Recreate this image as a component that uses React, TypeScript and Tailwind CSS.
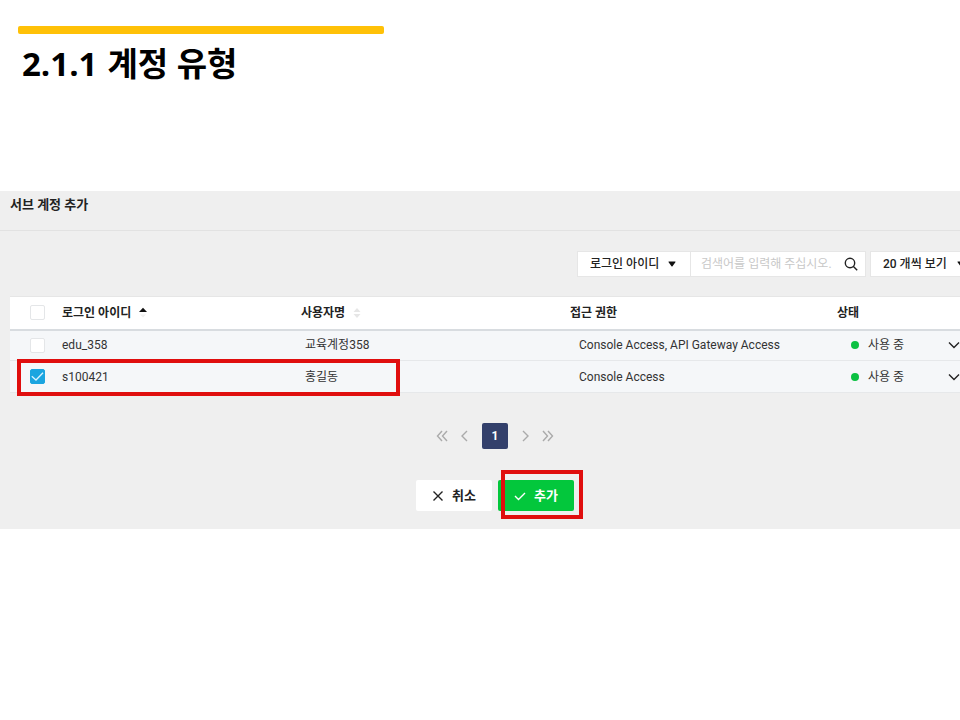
import React, { useState } from "react";

interface Account {
  id: string;
  name: string;
  access: string;
  status: string;
}

const accounts: Account[] = [
  {
    id: "edu_358",
    name: "교육계정358",
    access: "Console Access, API Gateway Access",
    status: "사용 중",
  },
  {
    id: "s100421",
    name: "홍길동",
    access: "Console Access",
    status: "사용 중",
  },
];

interface CheckboxProps {
  label: string;
  checked: boolean;
  onChange: () => void;
}

const Checkbox: React.FC<CheckboxProps> = ({ label, checked, onChange }) => (
  <label className="relative block size-[15px]">
    <input
      type="checkbox"
      aria-label={label}
      checked={checked}
      onChange={onChange}
      className="block size-[15px] appearance-none rounded-xs border border-[#e4e6e8] bg-white checked:border-[#1ba5e0] checked:bg-[#1ba5e0]"
    />
    {checked && (
      <svg
        viewBox="0 0 15 15"
        className="pointer-events-none absolute inset-0 size-[15px]"
        fill="none"
        stroke="#d9f3ff"
        strokeWidth="1.3"
      >
        <path d="M1.8 7.2 6 11l7-7.2" />
      </svg>
    )}
  </label>
);

const Caret = () => (
  <svg viewBox="0 0 8 6" className="h-[6px] w-[8px]" fill="#111">
    <path d="M.9.5h6.2q.8 0 .3.7L4.5 5.3q-.5.6-1 0L.6 1.2Q.1.5.9.5Z" />
  </svg>
);

// small stroked icons, drawn on a 12px grid
const Icon: React.FC<{ d: string }> = ({ d }) => (
  <svg
    viewBox="0 0 12 12"
    className="size-3"
    fill="none"
    stroke="currentColor"
    strokeWidth="1.4"
  >
    <path d={d} />
  </svg>
);

const App: React.FC = () => {
  const [selected, setSelected] = useState<string[]>(["s100421"]);
  const [keyword, setKeyword] = useState("");

  const toggle = (id: string) => {
    setSelected((prev) =>
      prev.includes(id) ? prev.filter((x) => x !== id) : [...prev, id],
    );
  };

  const toggleAll = () => {
    setSelected(
      selected.length === accounts.length ? [] : accounts.map((a) => a.id),
    );
  };

  return (
    <main className="min-h-screen overflow-hidden bg-white font-[Roboto,'Noto_Sans_CJK_KR',sans-serif] text-[12px] leading-4 text-[#333]">
      <header className="h-[191px] px-[18px] pt-[26px]">
        <div className="h-2 w-[366px] rounded-xs bg-[#ffc107]" />
        <h1 className="mt-2 flex gap-[10px] pl-1 font-['Open_Sans','Noto_Sans_CJK_KR',sans-serif] text-[33px] leading-11 font-bold text-black">
          <span>2.1.1</span>
          <span>계정 유형</span>
        </h1>
      </header>

      <section className="bg-[#efefef] pb-[18px]">
        <h2 className="h-10 border-b border-[#e2e2e2] px-[10px] pt-1 text-[13px] leading-5 font-bold text-[#222]">
          서브 계정 추가
        </h2>

        {/* Search bar */}
        <div className="-mr-4 flex justify-end gap-1 pt-5">
          <div className="flex h-[26px] border border-[#e6e6e6] bg-white">
            <div className="relative flex items-center border-r border-[#e6e6e6]">
              <select
                aria-label="검색 조건"
                className="h-6 w-[112px] appearance-none pl-3 font-medium text-[#222]"
              >
                <option>로그인 아이디</option>
              </select>
              <span className="pointer-events-none absolute right-[14px]">
                <Caret />
              </span>
            </div>
            <input
              type="text"
              aria-label="검색어"
              placeholder="검색어를 입력해 주십시오."
              value={keyword}
              onChange={(e) => setKeyword(e.target.value)}
              className="w-[150px] pl-[10px] outline-none placeholder:text-[#c8c8c8]"
            />
            <button
              type="button"
              aria-label="검색"
              className="w-6 pl-[3px] text-[#222]"
            >
              <svg
                viewBox="0 0 14 14"
                className="size-[14px]"
                fill="none"
                stroke="currentColor"
                strokeWidth="1.4"
              >
                <circle cx="6" cy="6" r="4.7" />
                <path d="m9.2 9.2 4 4" />
              </svg>
            </button>
          </div>
          <div className="relative flex h-[26px] items-center border border-[#e6e6e6] bg-white">
            <select
              aria-label="보기 개수"
              className="h-6 w-[104px] appearance-none pl-3 font-medium text-[#222]"
            >
              <option>20 개씩 보기</option>
            </select>
            <span className="pointer-events-none absolute right-[10px]">
              <Caret />
            </span>
          </div>
        </div>

        {/* Account list */}
        <div className="relative mt-[19px] ml-[10px]">
          <table className="w-full table-fixed border-collapse text-left">
            <colgroup>
              <col className="w-[52px]" />
              <col className="w-[239px]" />
              <col />
              <col className="w-[267px]" />
              <col className="w-[105px]" />
              <col className="w-[18px]" />
            </colgroup>
            <thead>
              <tr className="h-[33px] border-t border-b-2 border-t-[#e6e6e6] border-b-[#d8dce0] bg-white font-bold text-[#222]">
                <th className="pl-5">
                  <Checkbox
                    label="전체 선택"
                    checked={selected.length === accounts.length}
                    onChange={toggleAll}
                  />
                </th>
                <th>
                  <span className="flex items-center gap-2">
                    로그인 아이디
                    <svg viewBox="0 0 8 12" className="h-3 w-2">
                      <path d="M0 5 4 .8 8 5Z" fill="#111" />
                      <path d="M1 7.5h6L4 10.5Z" fill="#f0f0f0" />
                    </svg>
                  </span>
                </th>
                <th>
                  <span className="flex items-center gap-2">
                    사용자명
                    <svg viewBox="0 0 8 12" className="h-3 w-2" fill="#e6e6e6">
                      <path d="M.5 5 4 1l3.5 4Z" />
                      <path d="M.5 7h7L4 11Z" />
                    </svg>
                  </span>
                </th>
                <th>접근 권한</th>
                <th>상태</th>
                <th />
              </tr>
            </thead>
            <tbody>
              {accounts.map((account) => (
                <tr
                  key={account.id}
                  className="h-8 border-b border-[#e6e8ea] bg-[#f5f7f9] first:h-[31px]"
                >
                  <td className="pl-5">
                    <Checkbox
                      label={account.id}
                      checked={selected.includes(account.id)}
                      onChange={() => toggle(account.id)}
                    />
                  </td>
                  <td>{account.id}</td>
                  <td className="pl-1">{account.name}</td>
                  <td className="pl-[9px]">{account.access}</td>
                  <td className="pl-[14px]">
                    <span className="flex items-center gap-[9px]">
                      <span className="size-2 rounded-full bg-[#0bc142]" />
                      {account.status}
                    </span>
                  </td>
                  <td>
                    <button
                      type="button"
                      aria-label="상세 보기"
                      className="block pl-[6px] text-[#222]"
                    >
                      <Icon d="M1 3.5 6 8.5l5-5" />
                    </button>
                  </td>
                </tr>
              ))}
            </tbody>
          </table>
          <div className="pointer-events-none absolute -bottom-[3px] left-[7px] h-[37px] w-[383px] border-4 border-[#e00e0e]" />
        </div>

        {/* Pagination */}
        <nav className="mt-[30px] flex items-center justify-center gap-[11px] pl-[30px] text-[#aaa]">
          <button type="button" aria-label="처음">
            <Icon d="M6 1 1.5 6 6 11M11 1 6.5 6l4.500 5" />
          </button>
          <button type="button" aria-label="이전">
            <Icon d="M8 1 3 6l5 5" />
          </button>
          <button
            type="button"
            className="size-[26px] rounded-xs bg-[#33406b] font-bold text-white"
          >
            1
          </button>
          <button type="button" aria-label="다음">
            <Icon d="m4 1 5 5-5 5" />
          </button>
          <button type="button" aria-label="마지막">
            <Icon d="M1 1l4.5 5L1 11M6 1l4.5 5L6 11" />
          </button>
        </nav>

        <div className="mt-[31px] flex justify-center gap-[6px] pl-[30px] text-[13px] font-bold">
          <button
            type="button"
            className="flex h-[31px] w-[76px] items-center justify-center gap-2 rounded-xs bg-white text-[#222]"
          >
            <Icon d="m1.5 1.5 9 9m0-9-9 9" />
            취소
          </button>
          <div className="relative">
            <button
              type="button"
              className="flex h-[31px] w-[76px] items-center justify-center gap-2 rounded-xs bg-[#03c73c] text-white"
            >
              <Icon d="m1 6 3.5 3.5L11 3" />
              추가
            </button>
            <div className="pointer-events-none absolute -top-[10px] -right-[9px] h-[49px] w-[82px] border-4 border-[#e00e0e]" />
          </div>
        </div>
      </section>
    </main>
  );
};

export default App;
